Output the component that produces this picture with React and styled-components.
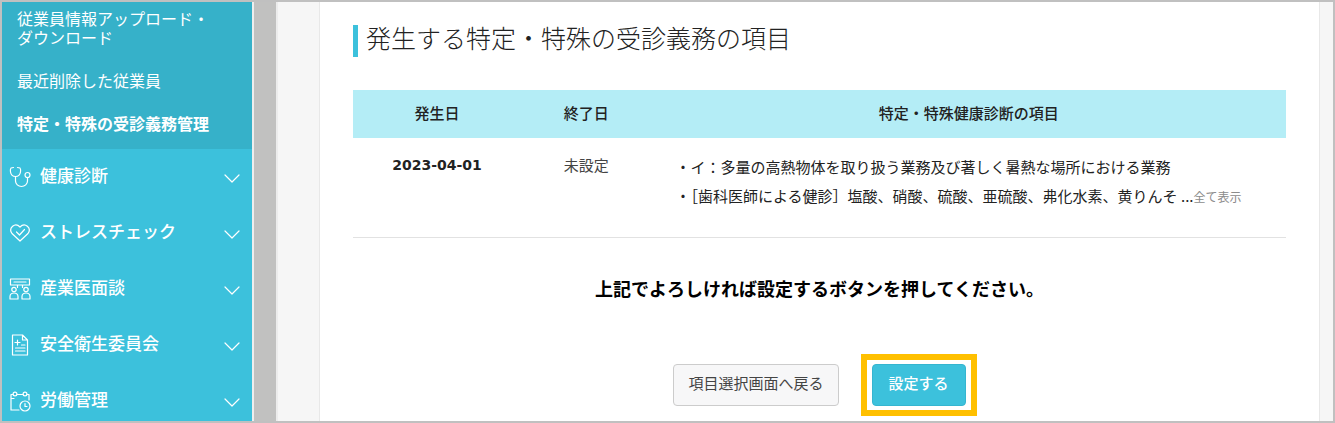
import React from 'react';
import styled, { createGlobalStyle } from 'styled-components';

const GlobalStyle = createGlobalStyle`
  *, *::before, *::after { box-sizing: border-box; }
  body {
    margin: 0;
    font-family: "Noto Sans CJK JP", sans-serif;
    font-size: 15px;
    color: #222;
    background: #fff;
  }
  button { font-family: inherit; cursor: pointer; }
`;

const Frame = styled.div`
  display: flex;
  height: 100vh;
  overflow: hidden;
  border: 2px solid #c0c0c0;
`;

const Sidebar = styled.nav`
  flex: 0 0 250px;
  background: #3cc1dc;
`;

const SubMenu = styled.ul`
  display: flex;
  flex-direction: column;
  gap: 24px;
  margin: 0;
  padding: 8px 15px 15px;
  list-style: none;
  background: #36b1c9;
`;

const SubLink = styled.a`
  display: block;
  color: #fff;
  font-family: "Liberation Sans", "Noto Sans CJK JP", sans-serif;
  font-size: 16px;
  line-height: 19px;
  font-weight: ${(p) => (p.$current ? 700 : 400)};
  text-decoration: none;
`;

const MenuButton = styled.button`
  display: flex;
  align-items: center;
  gap: 9px;
  width: 100%;
  height: 56px;
  padding: 0 12px 0 7px;
  border: 0;
  background: transparent;
  color: #fff;
  font-size: 17px;
  font-weight: 500;
  line-height: 24px;
  text-align: left;
`;

const MenuLabel = styled.span`
  flex: 1;
  padding-bottom: 4px;
`;

const Icon = styled.svg`
  flex: none;
  fill: none;
  stroke: #fff;
  stroke-width: 1.2;
  stroke-linecap: round;
  stroke-linejoin: round;
`;

const Gutter = styled.div`
  flex: 0 0 24px;
  background: #c1c1c0;
  border-left: 2px solid #eee;
`;

const Main = styled.main`
  flex: 1;
  min-width: 0;
  display: flex;
  padding: 0 13px 0 41px;
  background: #f6f6f6;
  border-left: 2px solid #ececec;
`;

const Card = styled.section`
  flex: 1;
  min-width: 0;
  padding: 23px 33px 0;
  background: #fff;
  border: solid #e8e8e8;
  border-width: 0 1px;
`;

const Title = styled.h1`
  margin: 0 0 33px;
  padding: 0 0 8px 8px;
  border-left: 5px solid #3cc1dc;
  font-size: 25px;
  font-weight: 300;
  line-height: 24px;
`;

const Table = styled.table`
  width: 100%;
  table-layout: fixed;
  border-collapse: collapse;
  border-bottom: 1px solid #e2e2e2;
`;

const HeadCell = styled.th`
  width: ${(p) => p.$width || 'auto'};
  height: 48px;
  padding: 0 0 2px;
  background: #b4edf6;
  font-weight: 500;
  line-height: 24px;
`;

const Cell = styled.td`
  padding: 15px 0 24px;
  vertical-align: top;
  text-align: center;
  line-height: 24px;
  color: #444;
`;

const DateCell = styled(Cell)`
  color: #222;
  font-family: "DejaVu Sans", sans-serif;
  font-size: 14px;
  font-weight: 700;
`;

const ItemsCell = styled(Cell)`
  height: 99px;
  padding: 14px 0 0 24px;
  color: #222;
  line-height: 29px;
  text-align: left;
  white-space: nowrap;
`;

const Items = styled.ul`
  margin: 0;
  padding: 0;
  list-style: none;
`;

const ShowAll = styled.a`
  color: #8c8c8c;
  font-size: 12px;
  text-decoration: none;
`;

const Message = styled.p`
  margin: 36px 0 52px;
  color: #000;
  font-size: 18px;
  font-weight: 700;
  line-height: 28px;
  text-align: center;
`;

const Actions = styled.div`
  display: flex;
  justify-content: center;
  align-items: center;
  gap: 22px;
  padding-left: 11px;
`;

const Button = styled.button`
  height: 42px;
  padding: 0 ${(p) => (p.$primary ? 16 : 14)}px 4px;
  border: 1px solid ${(p) => (p.$primary ? '#35b5d0' : '#ccc')};
  border-radius: 4px;
  background: ${(p) => (p.$primary ? '#3cc1dc' : '#f7f7f8')};
  color: ${(p) => (p.$primary ? '#fff' : '#444')};
  font-size: 15px;
  font-weight: ${(p) => (p.$primary ? 500 : 400)};
  line-height: 24px;
`;

const Highlight = styled.div`
  padding: 4px 5px;
  border: 6px solid #ffc000;
`;

const menu = [
  {
    label: '健康診断',
    icon: (
      <>
        <path d="M4.500 1.500L2 2Q1 3.500 1.500 6C2 9 4 10.500 6.500 10.500S11 9 11.500 6Q12 3.500 11 2L8.500 1.500" />
        <path d="M6.500 10.500v4.500a6 5.500 0 0 0 12 0V11.500" />
        <circle cx="18.500" cy="9" r="2.500" />
      </>
    ),
  },
  {
    label: 'ストレスチェック',
    icon: (
      <>
        <path d="M11 19L3 11.500C-1 6 6 0 11 5C16 0 23 6 19 11.500Z" />
        <path d="M7.500 10l3 3 5-5.500" />
      </>
    ),
  },
  {
    label: '産業医面談',
    icon: (
      <>
        <path d="M1.500 1h19v6h-19zM5 4h12M8.500 7v2.500M13.500 7v2.500" />
        <circle cx="5" cy="11.500" r="2.200" />
        <circle cx="17" cy="11.500" r="2.200" />
        <path d="M1 21v-2.500a4 3.500 0 0 1 8 0V21zM13 21v-2.500a4 3.500 0 0 1 8 0V21z" />
      </>
    ),
  },
  {
    label: '安全衛生委員会',
    icon: (
      <>
        <path d="M3.500 1h10l5 5v15h-15zM13.500 1v5h5" />
        <path d="M8.500 6v5M6 8.500h5M12.500 11H16M6.500 14H16M6.500 17H16" />
      </>
    ),
  },
  {
    label: '労働管理',
    icon: (
      <>
        <path d="M10 20H2V4.500h2M8 4.500h6M18 4.500h2V10M2 8.500h3" />
        <circle cx="6" cy="4" r="1.900" />
        <circle cx="16" cy="4" r="1.900" />
        <circle cx="16" cy="16" r="5" />
        <path d="M16 13.500V16.500h2" />
      </>
    ),
  },
];

export default function App() {
  return (
    <>
      <GlobalStyle />
      <Frame>
        <Sidebar>
          <SubMenu>
            <li>
              <SubLink href="#upload">
                従業員情報アップロード・
                <br />
                ダウンロード
              </SubLink>
            </li>
            <li>
              <SubLink href="#deleted">最近削除した従業員</SubLink>
            </li>
            <li>
              <SubLink href="#obligations" $current aria-current="page">
                特定・特殊の受診義務管理
              </SubLink>
            </li>
          </SubMenu>
          {menu.map((item) => (
            <MenuButton key={item.label} type="button">
              <Icon width="22" height="22" viewBox="0 0 22 22" aria-hidden="true">
                {item.icon}
              </Icon>
              <MenuLabel>{item.label}</MenuLabel>
              <Icon width="16" height="12" viewBox="0 0 16 12" aria-hidden="true">
                <path d="M1 4l7 7 7-7" />
              </Icon>
            </MenuButton>
          ))}
        </Sidebar>
        <Gutter />
        <Main>
          <Card>
            <Title>発生する特定・特殊の受診義務の項目</Title>
            <Table>
              <thead>
                <tr>
                  <HeadCell $width="18%">発生日</HeadCell>
                  <HeadCell $width="14%">終了日</HeadCell>
                  <HeadCell>特定・特殊健康診断の項目</HeadCell>
                </tr>
              </thead>
              <tbody>
                <tr>
                  <DateCell>2023-04-01</DateCell>
                  <Cell>未設定</Cell>
                  <ItemsCell>
                    <Items>
                      <li>・イ：多量の高熱物体を取り扱う業務及び著しく暑熱な場所における業務</li>
                      <li>
                        ・［歯科医師による健診］塩酸、硝酸、硫酸、亜硫酸、弗化水素、黄りんそ ...
                        <ShowAll href="#all">全て表示</ShowAll>
                      </li>
                    </Items>
                  </ItemsCell>
                </tr>
              </tbody>
            </Table>
            <Message>上記でよろしければ設定するボタンを押してください。</Message>
            <Actions>
              <Button type="button">項目選択画面へ戻る</Button>
              <Highlight>
                <Button type="button" $primary>
                  設定する
                </Button>
              </Highlight>
            </Actions>
          </Card>
        </Main>
      </Frame>
    </>
  );
}
